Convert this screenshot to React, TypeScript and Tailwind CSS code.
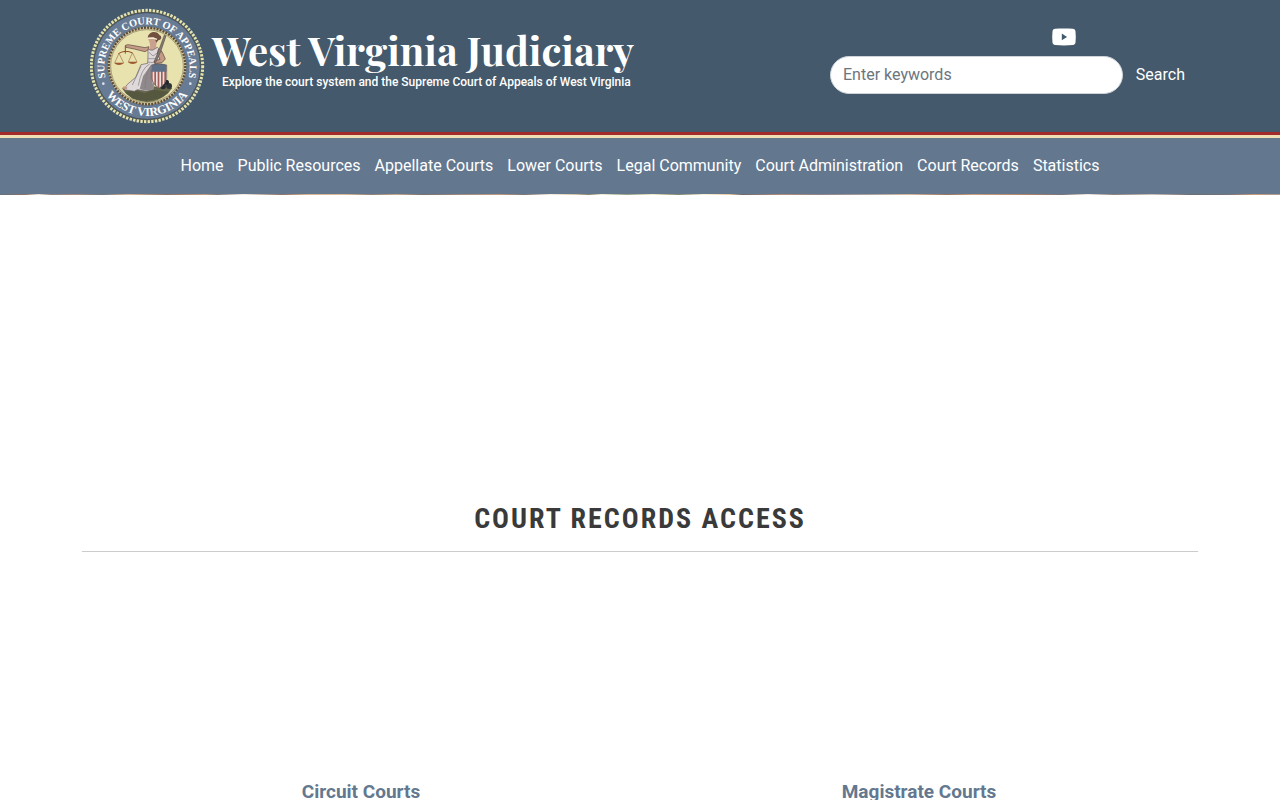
import { useState } from 'react';

const navLinks = [
  'Home',
  'Public Resources',
  'Appellate Courts',
  'Lower Courts',
  'Legal Community',
  'Court Administration',
  'Court Records',
  'Statistics',
];

const courts = ['Circuit Courts', 'Magistrate Courts'];

function YoutubeIcon() {
  return (
    <svg viewBox="0 0 24 18" className="w-6 h-[18px]" aria-hidden="true">
      <path
        fill="#fff"
        d="M3.2.8C6 .4 9 .4 12 .4s6 0 8.8.4c1.6.2 2.5 1.100 2.700 2.600.4 3.600.4 7.200 0 11-.2 1.600-1.100 2.400-2.700 2.600-5.800.5-11.800.5-17.600 0C1.600 16.800.7 16 .5 14.400c-.4-3.800-.4-7.400 0-11C.7 1.900 1.600 1 3.200.8Z"
      />
      <path fill="#44596c" d="M9.800 5.600v6.600l5.300-3.300Z" />
    </svg>
  );
}

function Seal() {
  return (
    <svg viewBox="18 12 348 348" className="w-[116px] h-[116px] shrink-0" role="img" aria-label="Court seal">
      <defs>
        <path id="seal-top" d="M80 256A128 128 0 1 1 298 256" />
        <path id="seal-bottom" d="M39 186A150 150 0 0 0 339 186" />
        <clipPath id="shield">
          <path d="M202 183q22-8 46 0v40q-3 18-23 30q-19-12-23-30Z" />
        </clipPath>
      </defs>

      {/* rope border */}
      <circle cx="189" cy="186" r="167" fill="#565f50" />
      <circle cx="189" cy="186" r="167" fill="none" stroke="#e6e3b0" strokeWidth="9" strokeDasharray="7 4" />
      <circle cx="189" cy="186" r="160" fill="#677b94" stroke="#3c4652" strokeWidth="2" />

      {/* inner disc with beads */}
      <circle cx="189" cy="186" r="118" fill="#cfc698" />
      <circle cx="189" cy="186" r="115" fill="none" stroke="#5c4b38" strokeWidth="7" strokeDasharray="6 3.500" />
      <circle cx="189" cy="186" r="109" fill="#e8e2ae" stroke="#8f8565" strokeWidth="2" />

      {/* ground */}
      <path d="M113 252q35-7 72-2q38-6 80 2l-14 17q-28 24-62 25q-35-1-62-24Z" fill="#666849" />
      <path d="M123 264l28-5 30 9 28-11 46 6-25 19-44 10-40-8Z" fill="#55583f" />

      {/* scales */}
      <g fill="none" stroke="#8c4b25" strokeWidth="3">
        <path d="M124 126v23M103 149q21-13 43-2" />
        <path d="M104 150l-12 27h27l-13-27M145 147l-12 27h26l-13-27" strokeWidth="1.500" />
      </g>
      <path d="M91 177h28q-5 6-14 6t-14-6ZM132 174h28q-5 6-14 6t-14-6Z" fill="#9b592e" />

      {/* figure */}
      <path d="M193 137l-10 6-32-8-25-5-2-6 8-2 24 4 27 5 12-3Z" fill="#c59c87" stroke="#594239" strokeWidth="2" />
      <path d="M199 130l-2-14-5-13q2-12 12-14 16-2 19 10 2 9-5 16l-2 13 9 6-1 23-22 1-11-13Z" fill="#c9a18e" />
      <path d="M191 101q2-14 16-17 14-1 20 10 5 0 5 8-3 7-9 7l-6 7-6-15-15-1Z" fill="#72503f" />
      <path d="M192 103l15-1 12 4" fill="none" stroke="#f3ead6" strokeWidth="4" />
      <path d="M192 135q9 5 15 3l13-8 13 12-5 24-7 13-1 22-12 29 2 26-23 6-27-5-9 5-31-5 10-16 25-21 16-38 20-4 1-22Z" fill="#dfd9d9" stroke="#665d62" strokeWidth="2" />
      <path d="M200 184l4 45 6 27-23 4-20-5 10-38Z" fill="#8f898c" />
      <g fill="none" stroke="#817881" strokeWidth="2">
        <path d="M195 145l12 11 14-10M192 164h28M190 174l19 2M197 180q-25 12-34 65" />
        <path d="M201 185q-18 28-18 67M171 186q-12 28-26 57" />
      </g>
      <path d="M223 136q9 1 13 11l8 18-10 11-22 3-2-8 18-5-8-17Z" fill="#c39a86" stroke="#594239" strokeWidth="2" />
      <path d="M241 93l5 3-16 47-15 33-5-2 14-35Z" fill="#837a70" stroke="#463f3a" strokeWidth="1.500" />
      <path d="M119 247l11 3-1 5-15-1Z" fill="#c59c87" />

      {/* shield and shot */}
      <circle cx="237" cy="247" r="9" fill="#282c30" />
      <circle cx="255" cy="246" r="9" fill="#30353a" />
      <circle cx="247" cy="235" r="8" fill="#22262a" />
      <g clipPath="url(#shield)">
        <path fill="#ece1dc" d="M200 178h50v82h-50z" />
        <path fill="#9f5c58" d="M201 198h5v60h-5zM211 198h5v60h-5zM221 198h5v60h-5zM231 198h5v60h-5zM241 198h5v60h-5z" />
        <path fill="#5c6f86" d="M200 178h50v25h-50z" />
      </g>
      <path d="M202 183q22-8 46 0v40q-3 18-23 30q-19-12-23-30Z" fill="none" stroke="#655356" strokeWidth="2" />

      <g fill="#fff" fontFamily="'Liberation Serif', serif" fontWeight="bold" textAnchor="middle">
        <text fontSize="31">
          <textPath href="#seal-top" startOffset="50%">SUPREME COURT OF APPEALS</textPath>
        </text>
        <text fontSize="36">
          <textPath href="#seal-bottom" startOffset="50%">WEST VIRGINIA</textPath>
        </text>
      </g>
      <circle cx="58" cy="239" r="4" fill="#dbe4ef" />
      <circle cx="319" cy="239" r="4" fill="#dbe4ef" />
    </svg>
  );
}

export default function App() {
  const [keywords, setKeywords] = useState('');

  return (
    <div className="min-h-screen bg-white font-[Roboto,sans-serif] text-base text-[#3a3a3a]">
      <header className="bg-[#44596c] border-b-3 border-[#a52a2a]">
        <div className="max-w-[1140px] mx-auto px-3 flex items-center justify-between">
          <a href="#" className="flex items-center p-2 gap-1.5 text-white">
            <Seal />
            <span className="flex flex-col pb-4">
              <span className="font-['Playfair_Display','Liberation_Serif',serif] font-bold text-[40px] leading-12 whitespace-nowrap">
                West Virginia Judiciary
              </span>
              <span className="pl-2.5 text-xs leading-4 font-medium whitespace-nowrap">
                Explore the court system and the Supreme Court of Appeals of West Virginia
              </span>
            </span>
          </a>

          <div className="w-[368px] flex flex-col pb-2.5">
            <div className="flex justify-end pr-[122px] mb-2.5">
              <a href="#" aria-label="YouTube">
                <YoutubeIcon />
              </a>
            </div>
            <form className="flex" onSubmit={(e) => e.preventDefault()}>
              <input
                type="search"
                aria-label="Enter keywords"
                placeholder="Enter keywords"
                value={keywords}
                onChange={(e) => setKeywords(e.target.value)}
                className="flex-1 min-w-0 h-[38px] px-3 pb-0.5 bg-white border border-[#ced4da] rounded-full text-[#212529] placeholder:text-[#6c757d]"
              />
              <button type="submit" className="h-[38px] px-[13px] text-white">
                Search
              </button>
            </form>
          </div>
        </div>
      </header>

      <nav className="bg-[#63788f] border-t-3 border-[#f0deb4] py-2">
        <ul className="flex flex-wrap justify-center">
          {navLinks.map((link) => (
            <li key={link}>
              <a href="#" className="block px-[7px] py-2 leading-6 text-white">
                {link}
              </a>
            </li>
          ))}
        </ul>
      </nav>
      {/* top edge of the banner photo */}
      <div className="h-px bg-[linear-gradient(90deg,#66707c,#8b7268_2%,#f0e6da_3%,#8c8080_4%,#a58c7c_6%,#6f747c_8%,#d5b495_10%,#8b7268_13%,#c39b7f_16%,#7d7878_17%,#f4eee4_19%,#8b7268_22%,#d9b48e_24%,#dcbb98_27%,#8d8078_29%,#c9a98c_31%,#75706f_33%,#a08a80_36%,#c39b7f_39%,#77757a_41%,#f5efe2_43%,#d8c3a4_45%,#7e8470_46%,#f6f0d8_47%,#94a087_49%,#f3eecd_51%,#7f8570_53%,#f8f2da_55%,#e8c8a0_57%,#6b6a70_58%,#b58c79_61%,#8c8488_64%,#a8a3a3_68%,#d9b99c_71%,#967567_74%,#c9a080_76%,#b58468_80%,#77757a_83%,#f2ece4_85%,#8c8080_87%,#cfc4b8_90%,#6d6c74_93%,#77747a_96%,#c99b7c_98%,#a99a90)]" />

      <main className="max-w-[1140px] mx-auto px-3 pt-[304px]">
        <h1 className="pb-3 border-b border-[#ccc] text-center font-['Roboto_Condensed',Roboto,sans-serif] font-bold text-[28px] leading-10 tracking-[2px] uppercase">
          Court Records Access
        </h1>
        <div className="grid grid-cols-2 pt-[228px]">
          {courts.map((court) => (
            <h2 key={court} className="text-center text-[19px] leading-6 font-bold text-[#63788f]">
              <a href="#">{court}</a>
            </h2>
          ))}
        </div>
      </main>
    </div>
  );
}
